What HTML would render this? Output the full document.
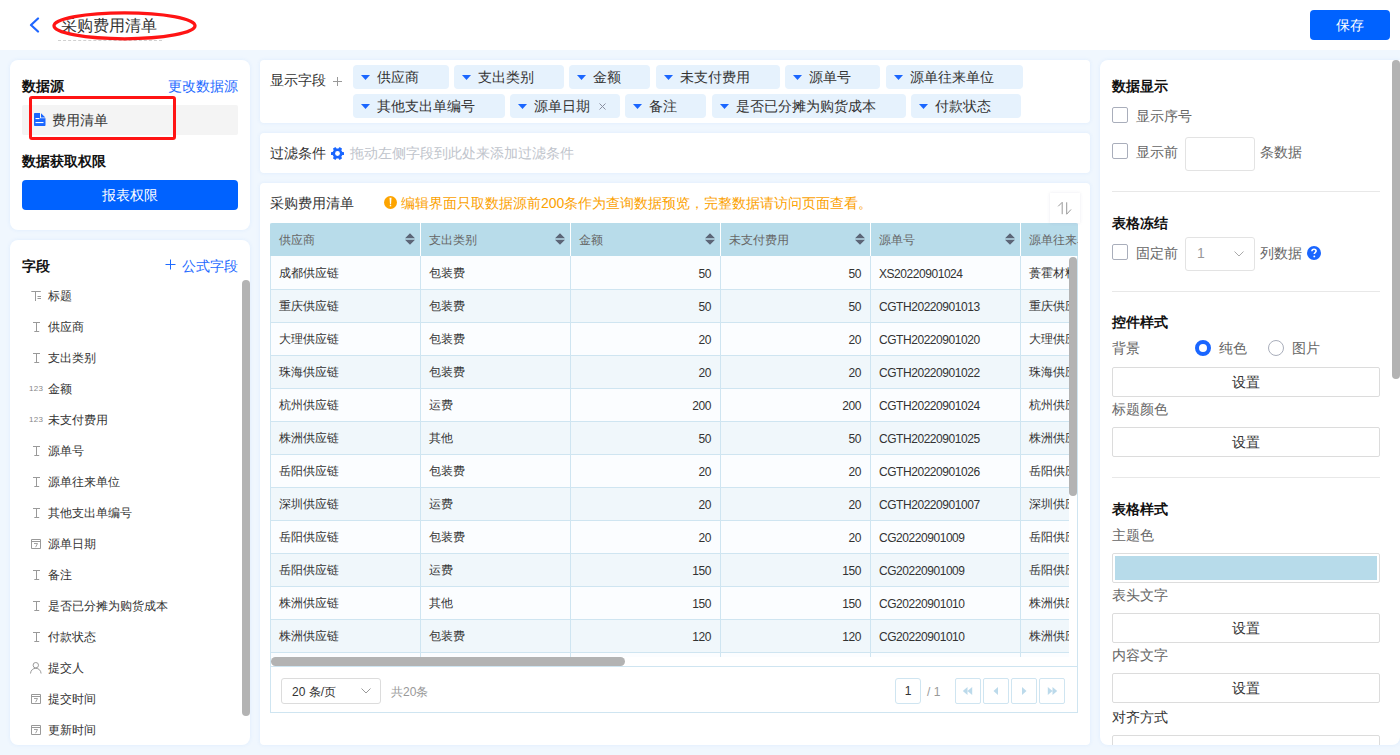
<!DOCTYPE html>
<html><head><meta charset="utf-8">
<style>
*{box-sizing:border-box;margin:0;padding:0}
html,body{width:1400px;height:755px;overflow:hidden}
body{font-family:"Liberation Sans",sans-serif;background:#f0f7fe;color:#333;position:relative;font-size:14px}
.abs{position:absolute}
.hdr{left:0;top:0;width:1400px;height:50px;background:#fff}
.panel{position:absolute;background:#fff;overflow:hidden;box-shadow:0 0 4px rgba(40,120,240,.09)}
.t14b{font-size:14px;font-weight:700;color:#111;line-height:14px;position:absolute;white-space:nowrap}
.t14{font-size:14px;line-height:14px;position:absolute;white-space:nowrap}
.btn{width:268px;height:30px;border:1px solid #dcdcdc;border-radius:2px;font-size:14px;line-height:28px;text-align:center;color:#333}
.num{letter-spacing:-0.45px}
.t12{font-size:12px;line-height:12px;position:absolute;white-space:nowrap}
</style></head><body>
<!-- header -->
<div class="abs hdr">
  <svg class="abs" style="left:28px;top:17px" width="12" height="16" viewBox="0 0 12 16"><path d="M10 1.5 L3 8 L10 14.5" fill="none" stroke="#1f66ff" stroke-width="2.2" stroke-linecap="round" stroke-linejoin="round"/></svg>
  <div class="abs" style="left:61px;top:18px;font-size:16px;line-height:16px;color:#333">采购费用清单</div>
  <div class="abs" style="left:58px;top:40px;width:104px;border-top:1px dashed #d0d0d0"></div>
  <svg class="abs" style="left:50px;top:9px" width="150" height="34" viewBox="0 0 150 34"><ellipse cx="74.5" cy="16.8" rx="70.5" ry="13" fill="none" stroke="#ff1414" stroke-width="3.3"/></svg>
  <div class="abs" style="left:1310px;top:10px;width:80px;height:30px;background:#0062ff;border-radius:4px;color:#fff;font-size:14px;line-height:30px;text-align:center">保存</div>
</div>

<!-- left panel 1 -->
<div class="panel" style="left:10px;top:60px;width:240px;height:170px;border-radius:8px">
  <div class="t14b" style="left:12px;top:19px">数据源</div>
  <div class="t14" style="left:158px;top:19px;color:#1f6bff">更改数据源</div>
  <div class="abs" style="left:12px;top:45px;width:216px;height:30px;background:#f4f4f4;border-radius:2px"></div>
  <svg class="abs" style="left:23.5px;top:53px" width="12" height="13" viewBox="0 0 12 13"><path d="M1 0H6V5.2H11.5V12C11.5 12.6 11.1 13 10.5 13H1C0.4 13 0 12.6 0 12V1C0 0.4 0.4 0 1 0Z" fill="#1a66ff"/><path d="M7 0.3L11.4 4.4H7Z" fill="#1a66ff"/><rect x="1.5" y="5" width="4" height="1.1" fill="#fff"/><rect x="1.5" y="9" width="8" height="1.1" fill="#fff"/></svg>
  <div class="t14" style="left:42px;top:53px;color:#333">费用清单</div>
  <div class="abs" style="left:19px;top:36px;width:147px;height:44px;border:3px solid #ff1414;border-radius:3px"></div>
  <div class="t14b" style="left:12px;top:94px">数据获取权限</div>
  <div class="abs" style="left:12px;top:120px;width:216px;height:30px;background:#0062ff;border-radius:4px;color:#fff;font-size:14px;line-height:30px;text-align:center">报表权限</div>
</div>

<!-- left panel 2 -->
<div class="panel" style="left:10px;top:240px;width:240px;height:505px;border-radius:8px">
  <div class="t14b" style="left:12px;top:19px">字段</div>
  <svg class="abs" style="left:155px;top:19px" width="11" height="11" viewBox="0 0 11 11"><path d="M5.5 0.5V10.5M0.5 5.5H10.5" stroke="#1f6bff" stroke-width="1"/></svg><div class="t14" style="left:172px;top:19px;color:#1f6bff">公式字段</div>
  <div class="abs" style="left:232px;top:40px;width:8px;height:436px;background:#b3b3b3;border-radius:4px"></div>
  <svg class="abs" style="left:20px;top:50px" width="12" height="12" viewBox="0 0 12 12"><path d="M1.3 1.5H10.8M5.5 1.5V11M7.5 6.5H11M7.5 8.5H11" stroke="#999" stroke-width="1" fill="none"/></svg>
<div class="t12" style="left:38px;top:50px;color:#333">标题</div>
<svg class="abs" style="left:20px;top:81px" width="12" height="12" viewBox="0 0 12 12"><path d="M3 1.5H10M6.5 1.5V10.5M4.3 10.5H9.2" stroke="#999" stroke-width="1" fill="none"/></svg>
<div class="t12" style="left:38px;top:81px;color:#333">供应商</div>
<svg class="abs" style="left:20px;top:112px" width="12" height="12" viewBox="0 0 12 12"><path d="M3 1.5H10M6.5 1.5V10.5M4.3 10.5H9.2" stroke="#999" stroke-width="1" fill="none"/></svg>
<div class="t12" style="left:38px;top:112px;color:#333">支出类别</div>
<div class="abs" style="left:19px;top:145px;font-size:8px;line-height:8px;color:#888;letter-spacing:0.3px">123</div>
<div class="t12" style="left:38px;top:143px;color:#333">金额</div>
<div class="abs" style="left:19px;top:176px;font-size:8px;line-height:8px;color:#888;letter-spacing:0.3px">123</div>
<div class="t12" style="left:38px;top:174px;color:#333">未支付费用</div>
<svg class="abs" style="left:20px;top:205px" width="12" height="12" viewBox="0 0 12 12"><path d="M3 1.5H10M6.5 1.5V10.5M4.3 10.5H9.2" stroke="#999" stroke-width="1" fill="none"/></svg>
<div class="t12" style="left:38px;top:205px;color:#333">源单号</div>
<svg class="abs" style="left:20px;top:236px" width="12" height="12" viewBox="0 0 12 12"><path d="M3 1.5H10M6.5 1.5V10.5M4.3 10.5H9.2" stroke="#999" stroke-width="1" fill="none"/></svg>
<div class="t12" style="left:38px;top:236px;color:#333">源单往来单位</div>
<svg class="abs" style="left:20px;top:267px" width="12" height="12" viewBox="0 0 12 12"><path d="M3 1.5H10M6.5 1.5V10.5M4.3 10.5H9.2" stroke="#999" stroke-width="1" fill="none"/></svg>
<div class="t12" style="left:38px;top:267px;color:#333">其他支出单编号</div>
<svg class="abs" style="left:20px;top:298px" width="12" height="12" viewBox="0 0 12 12"><path d="M1.5 1.5V10.5H10.5V1.5Z" stroke="#999" stroke-width="1" fill="none"/><path d="M1.5 3.5H10.5" stroke="#999" stroke-width="1" fill="none"/><path d="M4 5.5H7.5L5.6 9.2" stroke="#999" stroke-width="0.9" fill="none"/></svg>
<div class="t12" style="left:38px;top:298px;color:#333">源单日期</div>
<svg class="abs" style="left:20px;top:329px" width="12" height="12" viewBox="0 0 12 12"><path d="M3 1.5H10M6.5 1.5V10.5M4.3 10.5H9.2" stroke="#999" stroke-width="1" fill="none"/></svg>
<div class="t12" style="left:38px;top:329px;color:#333">备注</div>
<svg class="abs" style="left:20px;top:360px" width="12" height="12" viewBox="0 0 12 12"><path d="M3 1.5H10M6.5 1.5V10.5M4.3 10.5H9.2" stroke="#999" stroke-width="1" fill="none"/></svg>
<div class="t12" style="left:38px;top:360px;color:#333">是否已分摊为购货成本</div>
<svg class="abs" style="left:20px;top:391px" width="12" height="12" viewBox="0 0 12 12"><path d="M3 1.5H10M6.5 1.5V10.5M4.3 10.5H9.2" stroke="#999" stroke-width="1" fill="none"/></svg>
<div class="t12" style="left:38px;top:391px;color:#333">付款状态</div>
<svg class="abs" style="left:19px;top:422px" width="13" height="12" viewBox="0 0 13 12"><circle cx="6.8" cy="3.2" r="2.7" stroke="#999" stroke-width="1" fill="none"/><path d="M1.5 11.5C1.8 8.2 4 6.3 6.8 6.3S11.8 8.2 12.1 11.5" stroke="#999" stroke-width="1" fill="none"/></svg>
<div class="t12" style="left:38px;top:422px;color:#333">提交人</div>
<svg class="abs" style="left:20px;top:453px" width="12" height="12" viewBox="0 0 12 12"><path d="M1.5 1.5V10.5H10.5V1.5Z" stroke="#999" stroke-width="1" fill="none"/><path d="M1.5 3.5H10.5" stroke="#999" stroke-width="1" fill="none"/><path d="M4 5.5H7.5L5.6 9.2" stroke="#999" stroke-width="0.9" fill="none"/></svg>
<div class="t12" style="left:38px;top:453px;color:#333">提交时间</div>
<svg class="abs" style="left:20px;top:484px" width="12" height="12" viewBox="0 0 12 12"><path d="M1.5 1.5V10.5H10.5V1.5Z" stroke="#999" stroke-width="1" fill="none"/><path d="M1.5 3.5H10.5" stroke="#999" stroke-width="1" fill="none"/><path d="M4 5.5H7.5L5.6 9.2" stroke="#999" stroke-width="0.9" fill="none"/></svg>
<div class="t12" style="left:38px;top:484px;color:#333">更新时间</div>
</div>

<!-- middle: display fields -->
<div class="panel" style="left:260px;top:60px;width:830px;height:63px;border-radius:4px">
  <div class="t14" style="left:10px;top:13px;color:#333">显示字段</div>
  <svg class="abs" style="left:73px;top:17px" width="9" height="9" viewBox="0 0 9 9"><path d="M4.5 0V9M0 4.5H9" stroke="#999" stroke-width="1"/></svg>
  <div class="abs" style="left:93px;top:5px;width:96px;height:24px;background:#e6f2fd;border-radius:4px"><svg class="abs" style="left:8px;top:10px" width="9" height="5" viewBox="0 0 9 5"><path d="M0 0H9L4.5 5Z" fill="#1a66ff"/></svg><div class="t14" style="left:24px;top:5px;color:#333">供应商</div></div>
<div class="abs" style="left:194px;top:5px;width:110px;height:24px;background:#e6f2fd;border-radius:4px"><svg class="abs" style="left:8px;top:10px" width="9" height="5" viewBox="0 0 9 5"><path d="M0 0H9L4.5 5Z" fill="#1a66ff"/></svg><div class="t14" style="left:24px;top:5px;color:#333">支出类别</div></div>
<div class="abs" style="left:309px;top:5px;width:81px;height:24px;background:#e6f2fd;border-radius:4px"><svg class="abs" style="left:8px;top:10px" width="9" height="5" viewBox="0 0 9 5"><path d="M0 0H9L4.5 5Z" fill="#1a66ff"/></svg><div class="t14" style="left:24px;top:5px;color:#333">金额</div></div>
<div class="abs" style="left:396px;top:5px;width:124px;height:24px;background:#e6f2fd;border-radius:4px"><svg class="abs" style="left:8px;top:10px" width="9" height="5" viewBox="0 0 9 5"><path d="M0 0H9L4.5 5Z" fill="#1a66ff"/></svg><div class="t14" style="left:24px;top:5px;color:#333">未支付费用</div></div>
<div class="abs" style="left:525px;top:5px;width:95px;height:24px;background:#e6f2fd;border-radius:4px"><svg class="abs" style="left:8px;top:10px" width="9" height="5" viewBox="0 0 9 5"><path d="M0 0H9L4.5 5Z" fill="#1a66ff"/></svg><div class="t14" style="left:24px;top:5px;color:#333">源单号</div></div>
<div class="abs" style="left:626px;top:5px;width:137px;height:24px;background:#e6f2fd;border-radius:4px"><svg class="abs" style="left:8px;top:10px" width="9" height="5" viewBox="0 0 9 5"><path d="M0 0H9L4.5 5Z" fill="#1a66ff"/></svg><div class="t14" style="left:24px;top:5px;color:#333">源单往来单位</div></div>
<div class="abs" style="left:93px;top:34px;width:152px;height:24px;background:#e6f2fd;border-radius:4px"><svg class="abs" style="left:8px;top:10px" width="9" height="5" viewBox="0 0 9 5"><path d="M0 0H9L4.5 5Z" fill="#1a66ff"/></svg><div class="t14" style="left:24px;top:5px;color:#333">其他支出单编号</div></div>
<div class="abs" style="left:250px;top:34px;width:110px;height:24px;background:#e6f2fd;border-radius:4px"><svg class="abs" style="left:8px;top:10px" width="9" height="5" viewBox="0 0 9 5"><path d="M0 0H9L4.5 5Z" fill="#1a66ff"/></svg><div class="t14" style="left:24px;top:5px;color:#333">源单日期</div><svg class="abs" style="left:89px;top:9px" width="7" height="7" viewBox="0 0 7 7"><path d="M0.5 0.5L6.5 6.5M6.5 0.5L0.5 6.5" stroke="#8a8fa0" stroke-width="1"/></svg></div>
<div class="abs" style="left:365px;top:34px;width:81px;height:24px;background:#e6f2fd;border-radius:4px"><svg class="abs" style="left:8px;top:10px" width="9" height="5" viewBox="0 0 9 5"><path d="M0 0H9L4.5 5Z" fill="#1a66ff"/></svg><div class="t14" style="left:24px;top:5px;color:#333">备注</div></div>
<div class="abs" style="left:452px;top:34px;width:194px;height:24px;background:#e6f2fd;border-radius:4px"><svg class="abs" style="left:8px;top:10px" width="9" height="5" viewBox="0 0 9 5"><path d="M0 0H9L4.5 5Z" fill="#1a66ff"/></svg><div class="t14" style="left:24px;top:5px;color:#333">是否已分摊为购货成本</div></div>
<div class="abs" style="left:651px;top:34px;width:110px;height:24px;background:#e6f2fd;border-radius:4px"><svg class="abs" style="left:8px;top:10px" width="9" height="5" viewBox="0 0 9 5"><path d="M0 0H9L4.5 5Z" fill="#1a66ff"/></svg><div class="t14" style="left:24px;top:5px;color:#333">付款状态</div></div>
</div>

<!-- middle: filter -->
<div class="panel" style="left:260px;top:133px;width:830px;height:40px;border-radius:4px">
  <div class="t14" style="left:10px;top:13px;color:#333">过滤条件</div>
  <svg class="abs" style="left:71px;top:14px" width="13" height="13" viewBox="0 0 13 13"><g fill="#1a66ff" transform="translate(6.5 6.5)"><circle r="5"/><rect x="-1.6" y="-6.5" width="3.2" height="13" rx=".6" transform="rotate(30)"/><rect x="-1.6" y="-6.5" width="3.2" height="13" rx=".6" transform="rotate(90)"/><rect x="-1.6" y="-6.5" width="3.2" height="13" rx=".6" transform="rotate(150)"/></g><circle cx="6.5" cy="6.5" r="2.4" fill="#fff"/></svg>
  <div class="t14" style="left:90px;top:13px;color:#c0c4cc">拖动左侧字段到此处来添加过滤条件</div>
</div>

<!-- middle: table panel -->
<div class="panel" style="left:260px;top:183px;width:830px;height:562px;border-radius:4px">
  <div class="t14" style="left:10px;top:13px;color:#333">采购费用清单</div>
  <svg class="abs" style="left:124px;top:13px" width="13" height="13" viewBox="0 0 13 13"><circle cx="6.5" cy="6.5" r="6.5" fill="#fda400"/><path d="M5.5 1.8H7.5L7 8.2H6Z" fill="#fff"/><rect x="5.8" y="8.9" width="1.4" height="1.4" fill="#fff"/></svg>
  <div class="t14" style="left:141px;top:13px;color:#fba100">编辑界面只取数据源前200条作为查询数据预览，完整数据请访问页面查看。</div>
    <div class="abs" style="left:10px;top:40px;width:808px;height:490px;border:1px solid #cfe5f1;border-top:none;border-radius:2px 2px 0 0"></div>
<div class="abs" style="left:10px;top:40px;width:808px;height:33px;background:#b8dcea;border-radius:2px 2px 0 0;overflow:hidden">
<div class="t12" style="left:9px;top:11px;color:#666">供应商</div>
<svg class="abs" style="left:135px;top:10px" width="10" height="12" viewBox="0 0 10 12"><path d="M0 5.2H10L5 0.2Z M0 6.8H10L5 11.8Z" fill="#5c6677"/></svg>
<div class="abs" style="left:150px;top:0;width:1px;height:33px;background:#fff"></div>
<div class="t12" style="left:159px;top:11px;color:#666">支出类别</div>
<svg class="abs" style="left:285px;top:10px" width="10" height="12" viewBox="0 0 10 12"><path d="M0 5.2H10L5 0.2Z M0 6.8H10L5 11.8Z" fill="#5c6677"/></svg>
<div class="abs" style="left:300px;top:0;width:1px;height:33px;background:#fff"></div>
<div class="t12" style="left:309px;top:11px;color:#666">金额</div>
<svg class="abs" style="left:435px;top:10px" width="10" height="12" viewBox="0 0 10 12"><path d="M0 5.2H10L5 0.2Z M0 6.8H10L5 11.8Z" fill="#5c6677"/></svg>
<div class="abs" style="left:450px;top:0;width:1px;height:33px;background:#fff"></div>
<div class="t12" style="left:459px;top:11px;color:#666">未支付费用</div>
<svg class="abs" style="left:585px;top:10px" width="10" height="12" viewBox="0 0 10 12"><path d="M0 5.2H10L5 0.2Z M0 6.8H10L5 11.8Z" fill="#5c6677"/></svg>
<div class="abs" style="left:600px;top:0;width:1px;height:33px;background:#fff"></div>
<div class="t12" style="left:609px;top:11px;color:#666">源单号</div>
<svg class="abs" style="left:735px;top:10px" width="10" height="12" viewBox="0 0 10 12"><path d="M0 5.2H10L5 0.2Z M0 6.8H10L5 11.8Z" fill="#5c6677"/></svg>
<div class="abs" style="left:750px;top:0;width:1px;height:33px;background:#fff"></div>
<div class="t12" style="left:759px;top:11px;color:#666">源单往来单位</div>
</div>
<div class="abs" style="left:11px;top:73px;width:798px;height:401px;overflow:hidden">
<div class="abs" style="left:0;top:0px;width:900px;height:33px;background:#fbfdff;"></div>
<div class="t12" style="left:8px;top:11px;color:#333">成都供应链</div>
<div class="t12" style="left:158px;top:11px;color:#333">包装费</div>
<div class="t12 num" style="left:299px;width:141px;text-align:right;top:12px;color:#333">50</div>
<div class="t12 num" style="left:449px;width:141px;text-align:right;top:12px;color:#333">50</div>
<div class="t12 num" style="left:608px;top:12px;color:#333">XS20220901024</div>
<div class="t12" style="left:758px;top:11px;color:#333">蒉霍材料</div>
<div class="abs" style="left:0;top:33px;width:900px;height:33px;background:#f0f7fb;border-top:1px solid #cfe5f1;"></div>
<div class="t12" style="left:8px;top:44px;color:#333">重庆供应链</div>
<div class="t12" style="left:158px;top:44px;color:#333">包装费</div>
<div class="t12 num" style="left:299px;width:141px;text-align:right;top:45px;color:#333">50</div>
<div class="t12 num" style="left:449px;width:141px;text-align:right;top:45px;color:#333">50</div>
<div class="t12 num" style="left:608px;top:45px;color:#333">CGTH20220901013</div>
<div class="t12" style="left:758px;top:44px;color:#333">重庆供应链</div>
<div class="abs" style="left:0;top:66px;width:900px;height:33px;background:#fbfdff;border-top:1px solid #cfe5f1;"></div>
<div class="t12" style="left:8px;top:77px;color:#333">大理供应链</div>
<div class="t12" style="left:158px;top:77px;color:#333">包装费</div>
<div class="t12 num" style="left:299px;width:141px;text-align:right;top:78px;color:#333">20</div>
<div class="t12 num" style="left:449px;width:141px;text-align:right;top:78px;color:#333">20</div>
<div class="t12 num" style="left:608px;top:78px;color:#333">CGTH20220901020</div>
<div class="t12" style="left:758px;top:77px;color:#333">大理供应链</div>
<div class="abs" style="left:0;top:99px;width:900px;height:33px;background:#f0f7fb;border-top:1px solid #cfe5f1;"></div>
<div class="t12" style="left:8px;top:110px;color:#333">珠海供应链</div>
<div class="t12" style="left:158px;top:110px;color:#333">包装费</div>
<div class="t12 num" style="left:299px;width:141px;text-align:right;top:111px;color:#333">20</div>
<div class="t12 num" style="left:449px;width:141px;text-align:right;top:111px;color:#333">20</div>
<div class="t12 num" style="left:608px;top:111px;color:#333">CGTH20220901022</div>
<div class="t12" style="left:758px;top:110px;color:#333">珠海供应链</div>
<div class="abs" style="left:0;top:132px;width:900px;height:33px;background:#fbfdff;border-top:1px solid #cfe5f1;"></div>
<div class="t12" style="left:8px;top:143px;color:#333">杭州供应链</div>
<div class="t12" style="left:158px;top:143px;color:#333">运费</div>
<div class="t12 num" style="left:299px;width:141px;text-align:right;top:144px;color:#333">200</div>
<div class="t12 num" style="left:449px;width:141px;text-align:right;top:144px;color:#333">200</div>
<div class="t12 num" style="left:608px;top:144px;color:#333">CGTH20220901024</div>
<div class="t12" style="left:758px;top:143px;color:#333">杭州供应链</div>
<div class="abs" style="left:0;top:165px;width:900px;height:33px;background:#f0f7fb;border-top:1px solid #cfe5f1;"></div>
<div class="t12" style="left:8px;top:176px;color:#333">株洲供应链</div>
<div class="t12" style="left:158px;top:176px;color:#333">其他</div>
<div class="t12 num" style="left:299px;width:141px;text-align:right;top:177px;color:#333">50</div>
<div class="t12 num" style="left:449px;width:141px;text-align:right;top:177px;color:#333">50</div>
<div class="t12 num" style="left:608px;top:177px;color:#333">CGTH20220901025</div>
<div class="t12" style="left:758px;top:176px;color:#333">株洲供应链</div>
<div class="abs" style="left:0;top:198px;width:900px;height:33px;background:#fbfdff;border-top:1px solid #cfe5f1;"></div>
<div class="t12" style="left:8px;top:209px;color:#333">岳阳供应链</div>
<div class="t12" style="left:158px;top:209px;color:#333">包装费</div>
<div class="t12 num" style="left:299px;width:141px;text-align:right;top:210px;color:#333">20</div>
<div class="t12 num" style="left:449px;width:141px;text-align:right;top:210px;color:#333">20</div>
<div class="t12 num" style="left:608px;top:210px;color:#333">CGTH20220901026</div>
<div class="t12" style="left:758px;top:209px;color:#333">岳阳供应链</div>
<div class="abs" style="left:0;top:231px;width:900px;height:33px;background:#f0f7fb;border-top:1px solid #cfe5f1;"></div>
<div class="t12" style="left:8px;top:242px;color:#333">深圳供应链</div>
<div class="t12" style="left:158px;top:242px;color:#333">运费</div>
<div class="t12 num" style="left:299px;width:141px;text-align:right;top:243px;color:#333">20</div>
<div class="t12 num" style="left:449px;width:141px;text-align:right;top:243px;color:#333">20</div>
<div class="t12 num" style="left:608px;top:243px;color:#333">CGTH20220901007</div>
<div class="t12" style="left:758px;top:242px;color:#333">深圳供应链</div>
<div class="abs" style="left:0;top:264px;width:900px;height:33px;background:#fbfdff;border-top:1px solid #cfe5f1;"></div>
<div class="t12" style="left:8px;top:275px;color:#333">岳阳供应链</div>
<div class="t12" style="left:158px;top:275px;color:#333">包装费</div>
<div class="t12 num" style="left:299px;width:141px;text-align:right;top:276px;color:#333">20</div>
<div class="t12 num" style="left:449px;width:141px;text-align:right;top:276px;color:#333">20</div>
<div class="t12 num" style="left:608px;top:276px;color:#333">CG20220901009</div>
<div class="t12" style="left:758px;top:275px;color:#333">岳阳供应链</div>
<div class="abs" style="left:0;top:297px;width:900px;height:33px;background:#f0f7fb;border-top:1px solid #cfe5f1;"></div>
<div class="t12" style="left:8px;top:308px;color:#333">岳阳供应链</div>
<div class="t12" style="left:158px;top:308px;color:#333">运费</div>
<div class="t12 num" style="left:299px;width:141px;text-align:right;top:309px;color:#333">150</div>
<div class="t12 num" style="left:449px;width:141px;text-align:right;top:309px;color:#333">150</div>
<div class="t12 num" style="left:608px;top:309px;color:#333">CG20220901009</div>
<div class="t12" style="left:758px;top:308px;color:#333">岳阳供应链</div>
<div class="abs" style="left:0;top:330px;width:900px;height:33px;background:#fbfdff;border-top:1px solid #cfe5f1;"></div>
<div class="t12" style="left:8px;top:341px;color:#333">株洲供应链</div>
<div class="t12" style="left:158px;top:341px;color:#333">其他</div>
<div class="t12 num" style="left:299px;width:141px;text-align:right;top:342px;color:#333">150</div>
<div class="t12 num" style="left:449px;width:141px;text-align:right;top:342px;color:#333">150</div>
<div class="t12 num" style="left:608px;top:342px;color:#333">CG20220901010</div>
<div class="t12" style="left:758px;top:341px;color:#333">株洲供应链</div>
<div class="abs" style="left:0;top:363px;width:900px;height:33px;background:#f0f7fb;border-top:1px solid #cfe5f1;"></div>
<div class="t12" style="left:8px;top:374px;color:#333">株洲供应链</div>
<div class="t12" style="left:158px;top:374px;color:#333">包装费</div>
<div class="t12 num" style="left:299px;width:141px;text-align:right;top:375px;color:#333">120</div>
<div class="t12 num" style="left:449px;width:141px;text-align:right;top:375px;color:#333">120</div>
<div class="t12 num" style="left:608px;top:375px;color:#333">CG20220901010</div>
<div class="t12" style="left:758px;top:374px;color:#333">株洲供应链</div>
<div class="abs" style="left:0;top:396px;width:900px;height:33px;background:#fbfdff;border-top:1px solid #cfe5f1;"></div>
<div class="t12" style="left:8px;top:407px;color:#333"></div>
<div class="t12" style="left:158px;top:407px;color:#333"></div>
<div class="t12 num" style="left:299px;width:141px;text-align:right;top:408px;color:#333"></div>
<div class="t12 num" style="left:449px;width:141px;text-align:right;top:408px;color:#333"></div>
<div class="t12 num" style="left:608px;top:408px;color:#333"></div>
<div class="t12" style="left:758px;top:407px;color:#333"></div>
<div class="abs" style="left:149px;top:0;width:1px;height:401px;background:#cfe5f1"></div>
<div class="abs" style="left:299px;top:0;width:1px;height:401px;background:#cfe5f1"></div>
<div class="abs" style="left:449px;top:0;width:1px;height:401px;background:#cfe5f1"></div>
<div class="abs" style="left:599px;top:0;width:1px;height:401px;background:#cfe5f1"></div>
<div class="abs" style="left:749px;top:0;width:1px;height:401px;background:#cfe5f1"></div>
</div>
<div class="abs" style="left:809px;top:74px;width:8px;height:239px;background:#b3b3b3;border-radius:4px"></div>
<div class="abs" style="left:11px;top:474px;width:354px;height:9px;background:#b3b3b3;border-radius:4.5px"></div>
<div class="abs" style="left:10px;top:483px;width:808px;height:1px;background:#cfe5f1"></div>
<div class="abs" style="left:21px;top:495px;width:100px;height:26px;border:1px solid #dcdcdc;border-radius:3px"></div>
<div class="t12" style="left:32px;top:503px;color:#333">20 条/页</div>
<svg class="abs" style="left:101px;top:505px" width="10" height="6" viewBox="0 0 10 6"><path d="M0.5 0.5L5 5L9.5 0.5" stroke="#999" stroke-width="1" fill="none"/></svg>
<div class="t12" style="left:131px;top:503px;color:#999">共20条</div>
<div class="abs" style="left:635px;top:495px;width:26px;height:26px;border:1px solid #cfe5f1;border-radius:3px;font-size:12px;line-height:24px;text-align:center;color:#333">1</div>
<div class="t12" style="left:667px;top:503px;color:#999">/ 1</div>
<div class="abs" style="left:695px;top:495px;width:26px;height:26px;border:1px solid #cfe5f1;border-radius:2px"><svg class="abs" style="left:3px;top:4px" width="18" height="16" viewBox="0 0 18 16"><path d="M8.5 4L3.8 8L8.5 12Z M13.2 4L8.5 8L13.2 12Z" fill="#bcdaeb"/></svg></div>
<div class="abs" style="left:723px;top:495px;width:26px;height:26px;border:1px solid #cfe5f1;border-radius:2px"><svg class="abs" style="left:3px;top:4px" width="18" height="16" viewBox="0 0 18 16"><path d="M11 4L6.5 8L11 12Z" fill="#bcdaeb"/></svg></div>
<div class="abs" style="left:751px;top:495px;width:26px;height:26px;border:1px solid #cfe5f1;border-radius:2px"><svg class="abs" style="left:3px;top:4px" width="18" height="16" viewBox="0 0 18 16"><path d="M7 4L11.5 8L7 12Z" fill="#bcdaeb"/></svg></div>
<div class="abs" style="left:779px;top:495px;width:26px;height:26px;border:1px solid #cfe5f1;border-radius:2px"><svg class="abs" style="left:3px;top:4px" width="18" height="16" viewBox="0 0 18 16"><path d="M4.8 4L9.5 8L4.8 12Z M9.5 4L14.2 8L9.5 12Z" fill="#bcdaeb"/></svg></div>
<div class="abs" style="left:790px;top:10px;width:30px;height:30px;background:#fff;box-shadow:0 0 3px rgba(120,120,160,.15)"><svg class="abs" style="left:7px;top:8px" width="16" height="16" viewBox="0 0 16 16"><path d="M5.2 13.2V1.3L1.2 5.3M9.7 1.3V13.2L14 8.5" stroke="#999" stroke-width="1" fill="none"/></svg></div>
</div>

<!-- right panel -->
<div class="panel" style="left:1100px;top:60px;width:300px;height:685px;border-radius:8px 0 8px 8px">
    <div class="t14b" style="left:12px;top:19px">数据显示</div>
  <div class="abs" style="left:12px;top:47px;width:16px;height:16px;border:1px solid #a9aebb;border-radius:2px"></div>
  <div class="t14" style="left:36px;top:49px;color:#666">显示序号</div>
  <div class="abs" style="left:12px;top:83px;width:16px;height:16px;border:1px solid #a9aebb;border-radius:2px"></div>
  <div class="t14" style="left:36px;top:85px;color:#666">显示前</div>
  <div class="abs" style="left:85px;top:77px;width:70px;height:34px;border:1px solid #e3e3e3;border-radius:3px"></div>
  <div class="t14" style="left:160px;top:85px;color:#666">条数据</div>
  <div class="abs" style="left:12px;top:131px;width:268px;height:1px;background:#e8e8e8"></div>
  <div class="t14b" style="left:12px;top:156px">表格冻结</div>
  <div class="abs" style="left:12px;top:184px;width:16px;height:16px;border:1px solid #a9aebb;border-radius:2px"></div>
  <div class="t14" style="left:36px;top:186px;color:#666">固定前</div>
  <div class="abs" style="left:85px;top:177px;width:70px;height:34px;border:1px solid #e3e3e3;border-radius:3px"></div>
  <div class="t14" style="left:97px;top:186px;color:#999">1</div>
  <svg class="abs" style="left:134px;top:191px" width="10" height="6" viewBox="0 0 10 6"><path d="M0.5 0.5L5 5L9.5 0.5" stroke="#aaa" stroke-width="1" fill="none"/></svg>
  <div class="t14" style="left:160px;top:186px;color:#666">列数据</div>
  <svg class="abs" style="left:207px;top:186px" width="14" height="14" viewBox="0 0 14 14"><circle cx="7" cy="7" r="7" fill="#1a66ff"/><path d="M4.9 5.3C4.9 4 5.8 3.2 7 3.2S9.1 4 9.1 5.1C9.1 6.4 7.3 6.6 7.3 8.1" stroke="#fff" stroke-width="1.6" fill="none"/><circle cx="7.3" cy="10.4" r="0.95" fill="#fff"/></svg>
  <div class="abs" style="left:12px;top:231px;width:268px;height:1px;background:#e8e8e8"></div>
  <div class="t14b" style="left:12px;top:255px">控件样式</div>
  <div class="t14" style="left:12px;top:281px;color:#666">背景</div>
  <div class="abs" style="left:95px;top:280px;width:16px;height:16px;border:4.5px solid #1a66ff;border-radius:50%"></div>
  <div class="t14" style="left:119px;top:281px;color:#666">纯色</div>
  <div class="abs" style="left:168px;top:280px;width:16px;height:16px;border:1px solid #a9aebb;border-radius:50%"></div>
  <div class="t14" style="left:192px;top:281px;color:#666">图片</div>
  <div class="abs btn" style="left:12px;top:307px">设置</div>
  <div class="t14" style="left:12px;top:342px;color:#666">标题颜色</div>
  <div class="abs btn" style="left:12px;top:367px">设置</div>
  <div class="abs" style="left:12px;top:417px;width:268px;height:1px;background:#e8e8e8"></div>
  <div class="t14b" style="left:12px;top:442px">表格样式</div>
  <div class="t14" style="left:12px;top:468px;color:#666">主题色</div>
  <div class="abs" style="left:12px;top:493px;width:268px;height:30px;border:1px solid #ddd;border-radius:2px;padding:2px"><div style="width:100%;height:100%;background:#b7dbea"></div></div>
  <div class="t14" style="left:12px;top:528px;color:#666">表头文字</div>
  <div class="abs btn" style="left:12px;top:553px">设置</div>
  <div class="t14" style="left:12px;top:588px;color:#666">内容文字</div>
  <div class="abs btn" style="left:12px;top:613px">设置</div>
  <div class="t14" style="left:12px;top:650px;color:#333">对齐方式</div>
  <div class="abs btn" style="left:12px;top:675px"></div>

  <div class="abs" style="left:292px;top:0;width:8px;height:319px;background:#b3b3b3;border-radius:4px"></div>
</div>
</body></html>
